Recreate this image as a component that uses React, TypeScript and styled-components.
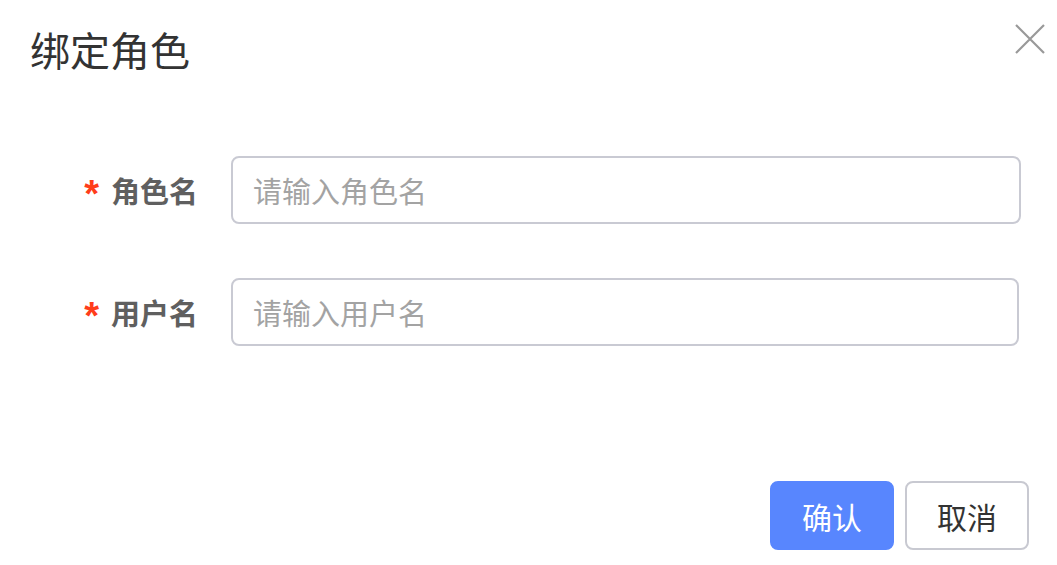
import * as React from 'react';
import styled, { createGlobalStyle } from 'styled-components';

const GlobalStyle = createGlobalStyle`
  html, body {
    margin: 0;
    padding: 0;
    background: #ffffff;
  }
  body {
    font-family: 'Noto Sans CJK SC', 'Noto Sans', sans-serif;
  }
`;

const Dialog = styled.div`
  width: 1057px;
  height: 565px;
  background: #ffffff;
  box-sizing: border-box;
  display: flex;
  flex-direction: column;
`;

const Header = styled.div`
  display: flex;
  justify-content: space-between;
  align-items: flex-start;
  padding: 24px 12px 0 30px;
`;

const Title = styled.div`
  font-size: 40px;
  line-height: 50px;
  color: #333333;
`;

const CloseButton = styled.button`
  width: 30px;
  height: 30px;
  padding: 0;
  border: none;
  background: transparent;
  cursor: pointer;
  display: flex;
  align-items: center;
  justify-content: center;
`;

const Form = styled.div`
  padding-top: 82px;
  display: flex;
  flex-direction: column;
  gap: 54px;
`;

const FormItem = styled.div`
  display: flex;
  align-items: center;
  height: 68px;
`;

const Label = styled.label`
  width: 231px;
  box-sizing: border-box;
  padding-right: 33px;
  display: flex;
  justify-content: flex-end;
  align-items: center;
  font-size: 29px;
  font-weight: 700;
  color: #5f5f5f;
`;

const Required = styled.span`
  color: #ff3d1a;
  margin-right: 12px;
  font-family: 'Liberation Sans', sans-serif;
  font-size: 38px;
  line-height: 30px;
  font-weight: 700;
  padding-top: 8px;
`;

const Input = styled.input<{ $width: number }>`
  width: ${(p) => p.$width}px;
  height: 68px;
  box-sizing: border-box;
  border: 2px solid #c9cad3;
  border-radius: 8px;
  padding: 0 20px;
  font-family: 'Noto Sans CJK SC', 'Noto Sans', sans-serif;
  font-size: 29px;
  color: #333333;
  outline: none;

  &::placeholder {
    color: #a3a3a3;
  }
`;

const Footer = styled.div`
  display: flex;
  justify-content: flex-end;
  gap: 11px;
  padding: 135px 28px 0 0;
`;

const Button = styled.button<{ $primary?: boolean }>`
  width: 124px;
  height: 69px;
  box-sizing: border-box;
  border-radius: 8px;
  border: 2px solid ${(p) => (p.$primary ? '#5886fe' : '#c8c9d1')};
  background: ${(p) => (p.$primary ? '#5886fe' : '#ffffff')};
  color: ${(p) => (p.$primary ? '#ffffff' : '#333333')};
  font-family: 'Noto Sans CJK SC', 'Noto Sans', sans-serif;
  font-size: 30px;
  padding: 0;
  cursor: pointer;
`;

const fields = [
  { label: '角色名', placeholder: '请输入角色名', width: 790 },
  { label: '用户名', placeholder: '请输入用户名', width: 788 },
];

export default function App() {
  return (
    <>
      <GlobalStyle />
      <Dialog>
        <Header>
          <Title>绑定角色</Title>
          <CloseButton aria-label="close">
            <svg width="30" height="30" viewBox="0 0 30 30">
              <path d="M1 1 L29 29 M29 1 L1 29" stroke="#999999" strokeWidth="2.2" fill="none" />
            </svg>
          </CloseButton>
        </Header>
        <Form>
          {fields.map((f) => (
            <FormItem key={f.label}>
              <Label>
                <Required>*</Required>
                {f.label}
              </Label>
              <Input $width={f.width} placeholder={f.placeholder} />
            </FormItem>
          ))}
        </Form>
        <Footer>
          <Button $primary>确认</Button>
          <Button>取消</Button>
        </Footer>
      </Dialog>
    </>
  );
}
